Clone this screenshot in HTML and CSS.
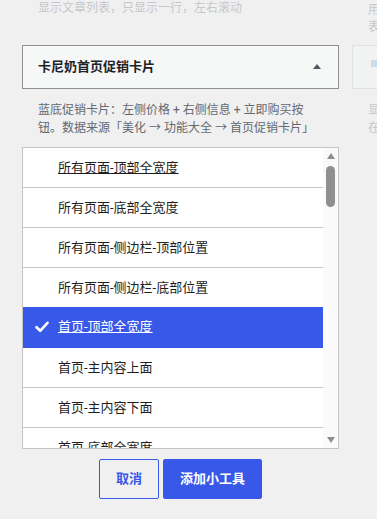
FILE: index.html
```html
<!DOCTYPE html>
<html lang="zh-CN">
<head>
<meta charset="utf-8">
<title>小工具</title>
<link rel="stylesheet" href="styles.css">
</head>
<body>
<div class="grid">
  <div class="cell faded">
    <p class="desc desc-top">显示文章列表，只显示一行，左右滚动</p>
  </div>
  <div class="cell faded">
    <p class="desc desc-top desc-top-right">用卡片形式展示热门文章，支持自定义数量<br>表格排序</p>
  </div>

  <div class="cell active">
    <div class="widget-top">
      <h3 class="widget-title">卡尼奶首页促销卡片</h3>
      <span class="arrow-up"></span>
    </div>
    <p class="desc widget-desc">蓝底促销卡片：左侧价格 + 右侧信息 + 立即购买按钮。数据来源「美化 → 功能大全 → 首页促销卡片」</p>
    <div class="listbox">
      <ul class="options">
        <li class="option focused"><span class="label">所有页面-顶部全宽度</span></li>
        <li class="option"><span class="label">所有页面-底部全宽度</span></li>
        <li class="option"><span class="label">所有页面-侧边栏-顶部位置</span></li>
        <li class="option"><span class="label">所有页面-侧边栏-底部位置</span></li>
        <li class="option selected">
          <svg class="check" width="14" height="12" viewBox="0 0 14 12"><path d="M1.5 6.2 L5.2 9.8 L12.5 1.8" fill="none" stroke="#fff" stroke-width="2.6" stroke-linecap="round" stroke-linejoin="round"/></svg>
          <span class="label">首页-顶部全宽度</span>
        </li>
        <li class="option"><span class="label">首页-主内容上面</span></li>
        <li class="option"><span class="label">首页-主内容下面</span></li>
        <li class="option"><span class="label">首页-底部全宽度</span></li>
      </ul>
      <div class="scrollbar">
        <span class="sb-up"></span>
        <span class="sb-thumb"></span>
        <span class="sb-down"></span>
      </div>
    </div>
    <div class="actions">
      <button class="btn btn-cancel">取消</button>
      <button class="btn btn-add">添加小工具</button>
    </div>
  </div>

  <div class="cell faded">
    <div class="widget-top widget-top-faded">
      <span class="mini-icon"></span>
    </div>
    <p class="desc widget-desc">显示最新的评论列表，可设置数量和头像<br>在侧边栏中使用</p>
  </div>
</div>
</body>
</html>
```

FILE: styles.css
```css
* { box-sizing: border-box; }

html, body {
  margin: 0;
  padding: 0;
}

body {
  width: 377px;
  height: 519px;
  overflow: hidden;
  background: #f0f0f1;
  font-family: Roboto, "Noto Sans CJK SC", sans-serif;
  color: #1e1e1e;
}

.grid {
  display: grid;
  grid-template-columns: 317px 317px;
  column-gap: 13px;
  row-gap: 9px;
  padding-left: 22px;
  margin-top: -1px;
  align-items: start;
}

.cell { min-width: 0; }

.faded { opacity: 0.3; }

.desc {
  margin: 0;
  font-size: 12px;
  line-height: 18px;
  color: #646970;
  padding: 0 16px;
}

.desc-top-right {
  margin-top: 3px;
  line-height: 17px;
  white-space: nowrap;
}

.widget-top {
  height: 44px;
  border: 1px solid #8c8f94;
  background: #f6f7f7;
  display: flex;
  align-items: center;
  justify-content: space-between;
  padding: 0 17px 0 15px;
}

.widget-top-faded {
  border-color: #c3c4c7;
  background: #f6f7f7;
}

.mini-icon {
  width: 14px;
  height: 7px;
  background: #72aee6;
  margin-left: 3px;
  margin-top: -7px;
}

.widget-title {
  margin: 0;
  font-size: 13px;
  font-weight: 700;
  color: #1d2327;
  line-height: 18px;
}

.arrow-up {
  width: 0;
  height: 0;
  border-left: 4px solid transparent;
  border-right: 4px solid transparent;
  border-bottom: 5px solid #50575e;
  margin-top: -1px;
}

.widget-desc {
  margin-top: 12px;
}

.listbox {
  margin-top: 10px;
  height: 302px;
  border: 1px solid #c3c4c7;
  background: #fff;
  display: flex;
  overflow: hidden;
}

.options {
  list-style: none;
  margin: 0;
  padding: 0;
  flex: 1;
  overflow: hidden;
}

.option {
  height: 40px;
  border-bottom: 1px solid #c3c4c7;
  display: flex;
  align-items: center;
  padding-left: 35px;
  position: relative;
  font-size: 13px;
  color: #1e1e1e;
  line-height: 18px;
}

.option.focused .label { text-decoration: underline; }

.option.selected {
  background: #3858e9;
  border-bottom-color: #3858e9;
  color: #fff;
  margin-top: -1px;
  height: 41px;
}

.option.selected .label { text-decoration: underline; }

.check {
  position: absolute;
  left: 12px;
  top: 14px;
}

.scrollbar {
  width: 15px;
  background: #fafafa;
  display: flex;
  flex-direction: column;
  align-items: center;
}

.sb-up, .sb-down {
  width: 0;
  height: 0;
  border-left: 4.5px solid transparent;
  border-right: 4.5px solid transparent;
}

.sb-up {
  margin-top: 5px;
  border-bottom: 6px solid #8f8f8f;
}

.sb-thumb {
  margin-top: 7px;
  width: 9px;
  height: 41px;
  border-radius: 4.5px;
  background: #8f8f8f;
}

.sb-down {
  margin-top: auto;
  margin-bottom: 5px;
  border-top: 6px solid #8f8f8f;
}

.actions {
  margin-top: 10px;
  display: flex;
  justify-content: center;
  gap: 4px;
}

.btn {
  height: 40px;
  padding: 0 16px;
  border: 1px solid #3858e9;
  border-radius: 2px;
  font-family: Roboto, "Noto Sans CJK SC", sans-serif;
  font-size: 13px;
  font-weight: 600;
  line-height: 18px;
  cursor: pointer;
}

.btn-cancel {
  background: transparent;
  color: #3858e9;
}

.btn-add {
  background: #3858e9;
  color: #fff;
}
```
